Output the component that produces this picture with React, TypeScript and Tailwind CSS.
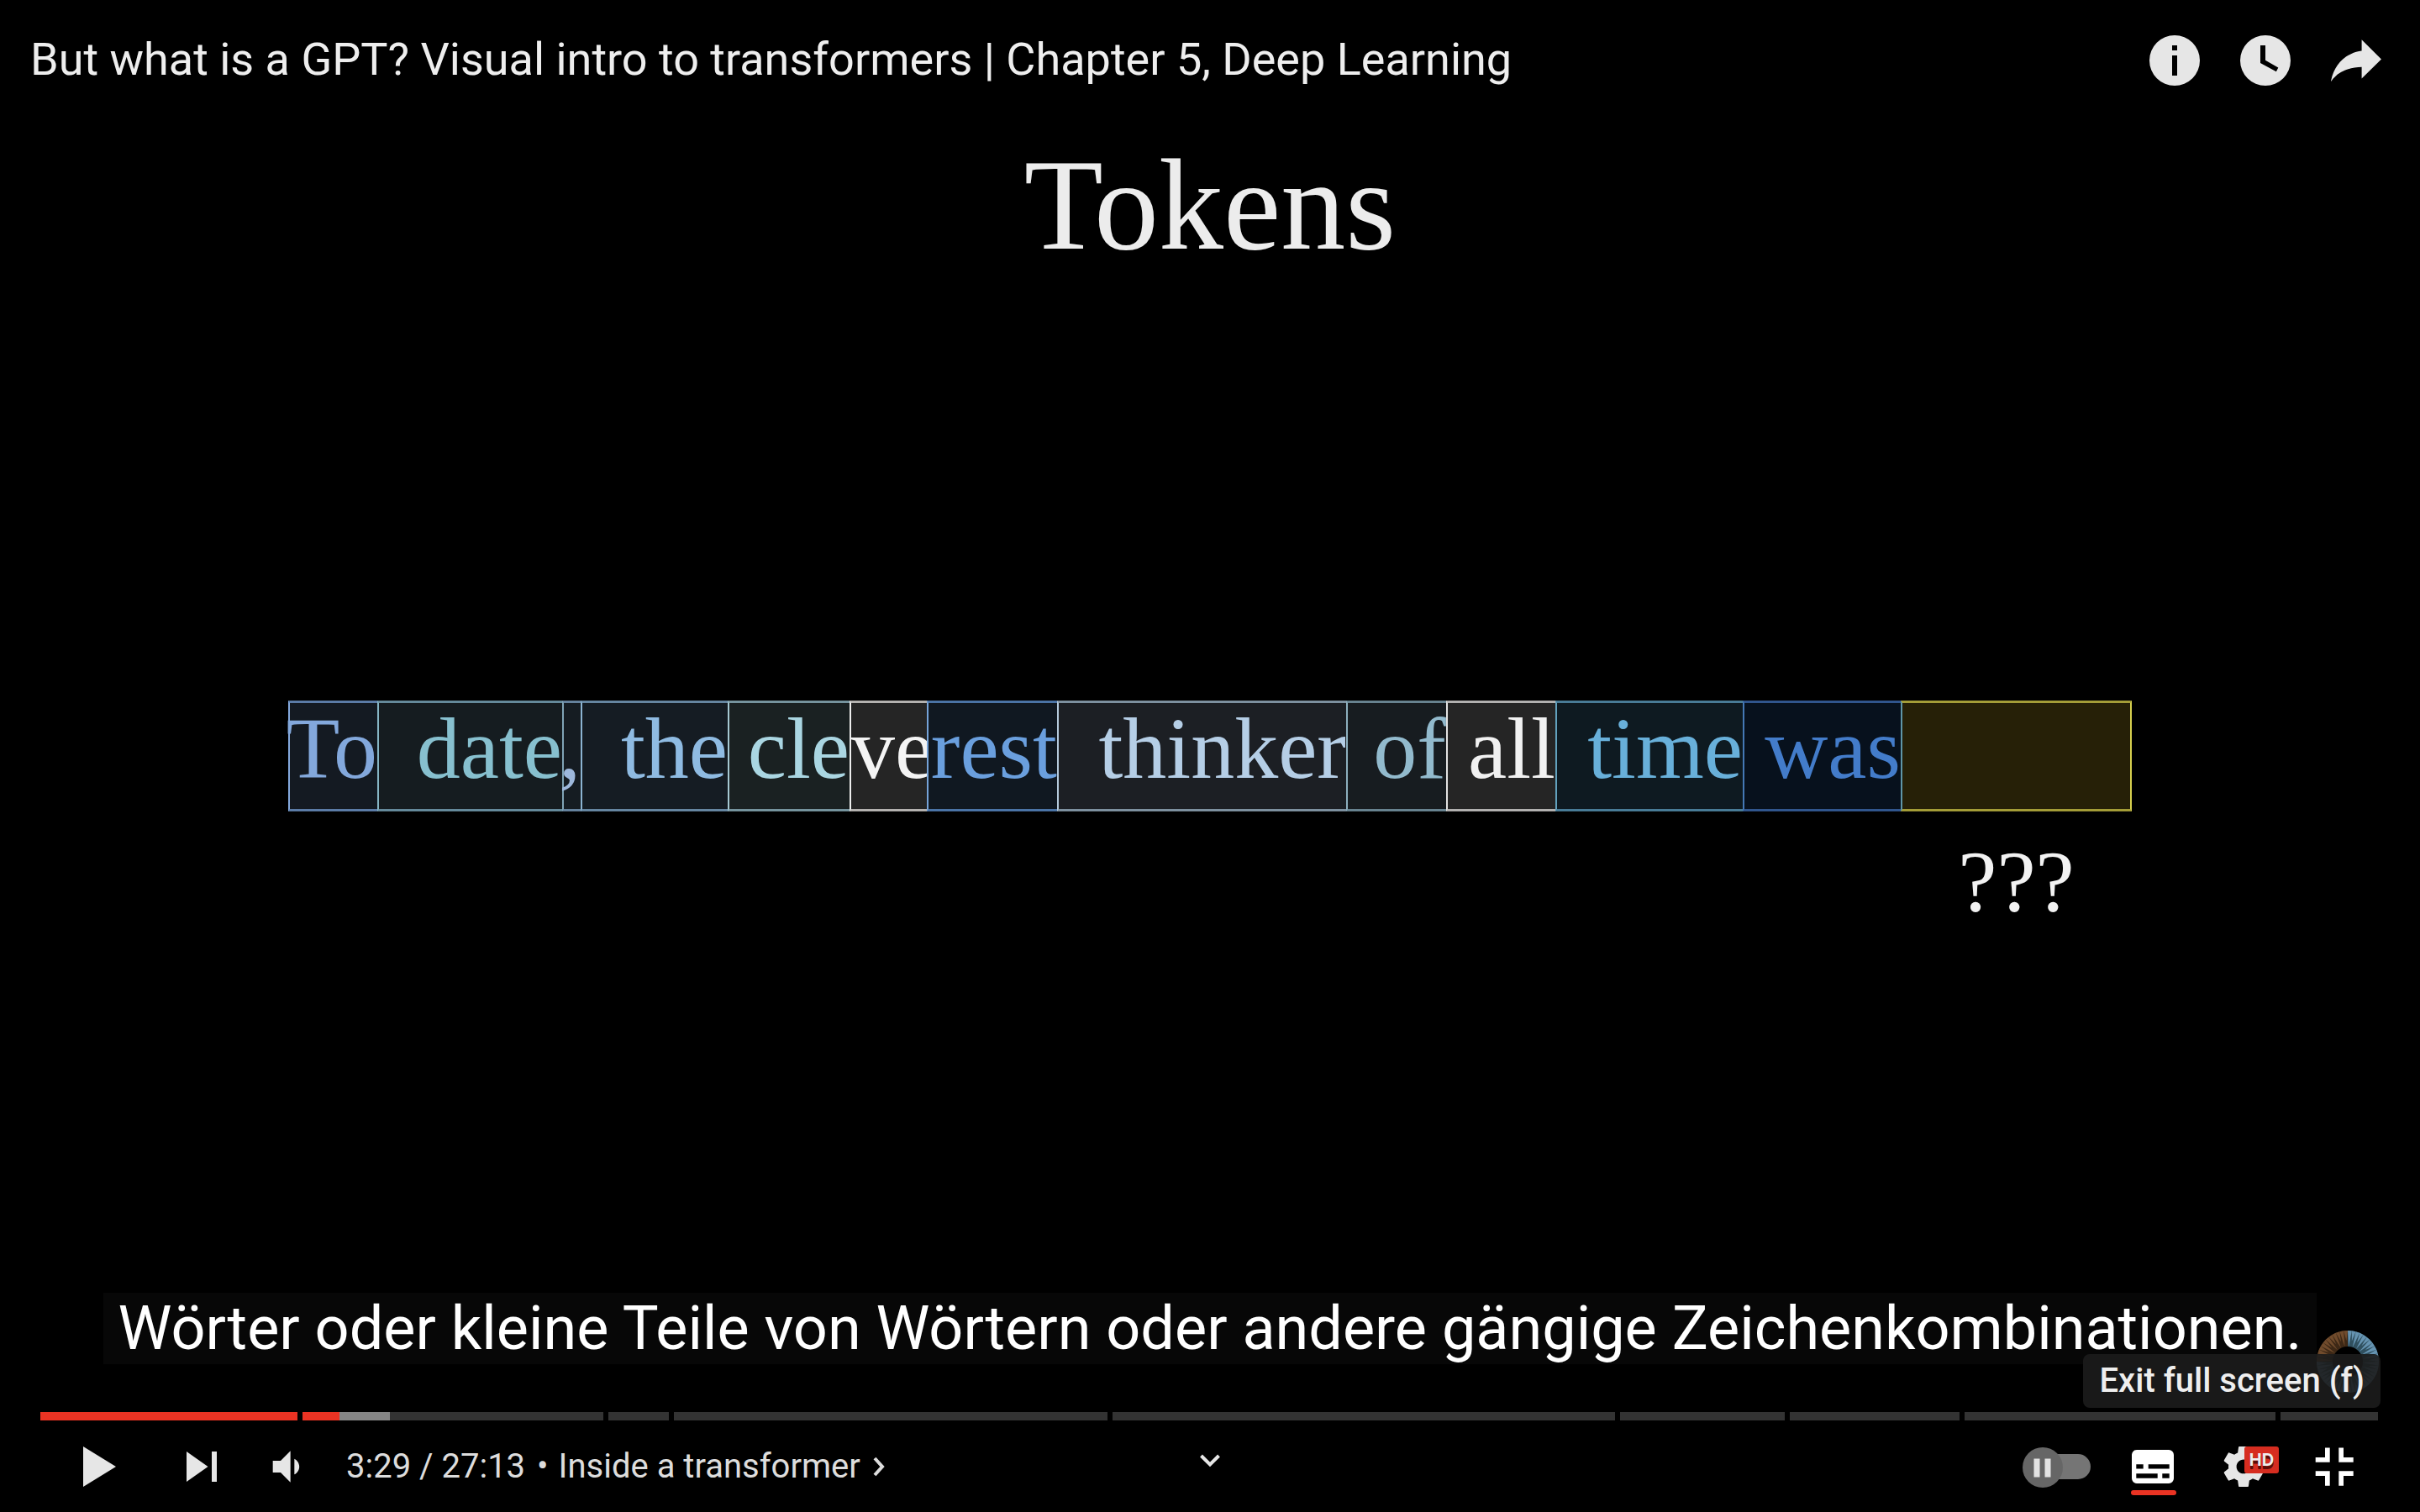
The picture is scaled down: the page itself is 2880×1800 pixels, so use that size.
import type { ReactNode } from "react";

type Token = { text: string; box: string };

const tokens: Token[] = [
  { text: "To", box: "justify-end bg-[#141a22] text-[#83a8dc] border-y-[#5b7ba6] border-l-[#83a8dc]" },
  { text: "date", box: "justify-end bg-[#151c20] text-[#87c0cf] border-y-[#64899a] border-l-[#86b5c4]" },
  { text: ",", box: "justify-end bg-[#151c22] text-[#9db8dc] border-y-[#64819c] border-l-[#7fa3b5]" },
  { text: "the", box: "justify-end bg-[#151c23] text-[#8fbbe2] border-y-[#6585a0] border-l-[#8cb4d2]" },
  { text: "cle", box: "justify-end bg-[#1a2122] text-[#aad6e2] border-y-[#75939d] border-l-[#a5c8d2]" },
  { text: "ve", box: "justify-start bg-[#252525] text-[#f4f4f4] border-y-[#b3b1af] border-l-[#ededed]" },
  { text: "rest", box: "justify-end bg-[#101821] text-[#6a9fde] border-y-[#4a73a5] border-l-[#76a3d8]" },
  { text: "thinker", box: "justify-end bg-[#1c1f24] text-[#b5cee6] border-y-[#7d909f] border-l-[#b4c9dc]" },
  { text: "of", box: "justify-end bg-[#171c20] text-[#92bacd] border-y-[#67828f] border-l-[#8dafbd]" },
  { text: "all", box: "justify-end bg-[#252525] text-[#f1f1f1] border-y-[#b1b0af] border-l-[#e2e2e2]" },
  { text: "time", box: "justify-end bg-[#0e1a21] text-[#68b0da] border-y-[#487b96] border-l-[#62a1bd]" },
  { text: "was", box: "justify-end bg-[#07111d] text-[#437cca] border-y-[#30558c] border-l-[#4478b5]" },
  { text: "", box: "bg-[#262007] border-y-[#a39c37] border-l-[#5f96a8] border-r-2 border-r-[#d6cf4e]" },
];

const chapters = [
  { length: 306, played: 306, loaded: 306 },
  { length: 358, played: 44, loaded: 104 },
  { length: 72, played: 0, loaded: 0 },
  { length: 516, played: 0, loaded: 0 },
  { length: 598, played: 0, loaded: 0 },
  { length: 196, played: 0, loaded: 0 },
  { length: 202, played: 0, loaded: 0 },
  { length: 370, played: 0, loaded: 0 },
  { length: 116, played: 0, loaded: 0 },
];

const tokenGrid =
  "grid grid-cols-[106fr_220fr_22fr_175fr_145fr_92fr_155fr_344fr_119fr_130fr_223fr_188fr_275fr]";

function IconButton({ label, children }: { label: string; children: ReactNode }) {
  return (
    <button type="button" aria-label={label} className="relative size-27 shrink-0">
      {children}
    </button>
  );
}

function Header() {
  return (
    <header className="flex items-center justify-between py-[18px] pr-[22px] pl-9">
      <a href="#video" className="pb-0.5 text-[54px] leading-[64px] text-[#eeeeee]">
        But what is a GPT? Visual intro to transformers | Chapter 5, Deep Learning
      </a>
      <div className="flex text-[#e6e6e6]">
        <IconButton label="Info">
          <svg viewBox="0 0 36 36" className="size-27" fill="currentColor" fillRule="evenodd">
            <path d="M18 8a10 10 0 1 0 0 20 10 10 0 0 0 0-20zM17 12h2v2h-2zM17 16h2v8h-2z" />
          </svg>
        </IconButton>
        <IconButton label="Watch later">
          <svg viewBox="0 0 36 36" className="size-27" fill="currentColor" fillRule="evenodd">
            <path d="M18 8a10 10 0 1 0 0 20 10 10 0 0 0 0-20zM16 12h2v5.9l5.1 2.9-.8 1.6L16 19z" />
          </svg>
        </IconButton>
        <IconButton label="Share">
          <svg viewBox="0 0 36 36" className="size-27" fill="currentColor">
            <path d="m20.2 14.19 0-4.45 7.79 7.79-7.79 7.62 0-4.56C16.27 20.69 12.1 21.81 9.34 24.76 8.8 25.13 7.6 27.29 8.12 25.65 9.08 21.32 11.8 17.18 15.98 15.38c1.33-.6 2.76-.98 4.22-1.19z" />
          </svg>
        </IconButton>
      </div>
    </header>
  );
}

function TokenSentence() {
  return (
    <section className="flex flex-1 flex-col justify-center gap-8 px-[343px] pt-[76px] font-['Liberation_Serif',serif] text-[104px] leading-[104px]">
      <div className={tokenGrid}>
        {tokens.map((t, i) => (
          <span key={i} className={`flex h-33 min-w-0 border-y-3 border-l-2 pt-0.5 ${t.box}`}>
            {t.text}
          </span>
        ))}
      </div>
      <div className={tokenGrid}>
        <span className="col-start-13 text-center text-[#f2f2f2]">???</span>
      </div>
    </section>
  );
}

function Watermark() {
  const count = 48;
  const point = (angle: number, r: number) =>
    `${(37 + r * Math.sin(angle)).toFixed(2)},${(37 - r * Math.cos(angle)).toFixed(2)}`;
  return (
    <svg viewBox="0 0 74 74" className="absolute right-[49px] bottom-[-34px] size-[74px]" aria-hidden="true">
      <path d="M37 9.5A27.5 27.5 0 1 1 9.5 37" fill="none" stroke="#30505f" strokeWidth="19" />
      <path d="M9.5 37A27.5 27.5 0 0 1 37 9.5" fill="none" stroke="#3d2816" strokeWidth="19" />
      {Array.from({ length: count }, (_, i) => {
        const step = (2 * Math.PI) / count;
        const a = i * step;
        const reach = i % 2 === 0 ? 18 : 25;
        return (
          <polygon
            key={i}
            points={`${point(a, 37)} ${point(a + step, 37)} ${point(a + step / 2, reach)}`}
            fill={i >= (count * 3) / 4 ? "#704b2c" : "#6593b1"}
          />
        );
      })}
    </svg>
  );
}

function Progress() {
  return (
    <div
      role="slider"
      tabIndex={0}
      aria-label="Seek slider"
      aria-valuemin={0}
      aria-valuemax={1633}
      aria-valuenow={209}
      className="mt-[57px] mr-[50px] mb-px ml-12 flex gap-1.5"
    >
      {chapters.map((c, i) => (
        <div
          key={i}
          className="flex h-2.5 min-w-0 basis-0 bg-[#333333]"
          style={{ flexGrow: c.length }}
        >
          <div className="bg-[#ea3323]" style={{ width: `${(c.played / c.length) * 100}%` }} />
          <div
            className="bg-[#858585]"
            style={{ width: `${((c.loaded - c.played) / c.length) * 100}%` }}
          />
        </div>
      ))}
    </div>
  );
}

function Controls() {
  return (
    <div className="grid grid-cols-[1fr_auto_1fr] items-center pr-12 pl-[63px] text-[#e6e6e6]">
      <div className="flex items-center">
        <IconButton label="Play">
          <svg viewBox="0 0 36 36" className="size-27" fill="currentColor">
            <path d="M12 10v16l13-8z" />
          </svg>
        </IconButton>
        <div className="ml-[15px] flex">
          <IconButton label="Next">
            <svg viewBox="0 0 36 36" className="size-27" fill="currentColor">
              <path d="M12 24l8.5-6L12 12zM22 12v12h2V12z" />
            </svg>
          </IconButton>
        </div>
        <button type="button" aria-label="Mute" className="ml-3 size-21">
          <svg viewBox="0 0 36 36" className="size-21" fill="currentColor">
            <path d="M8 21h4l5 5V10l-5 5H8zM19 14v8c1.48-.68 2.5-2.23 2.5-4 0-1.74-1.02-3.26-2.5-4z" />
          </svg>
        </button>
        <div className="ml-[22px] flex items-center gap-3.5 text-[40px] leading-12 whitespace-nowrap text-[#dddddd]">
          <span>3:29 / 27:13</span>
          <button type="button" className="flex items-center gap-3.5">
            <span className="-mr-0.5">•</span>
            <span>Inside a transformer</span>
            <svg viewBox="0 0 16 24" className="h-6 w-4" fill="none" stroke="currentColor" strokeWidth="4">
              <path d="M3 2l9 10-9 10" />
            </svg>
          </button>
        </div>
      </div>

      <button type="button" aria-label="Scroll for details" className="-ml-[15px] size-12">
        <svg viewBox="0 0 48 48" className="size-12" fill="none" stroke="currentColor" strokeWidth="4">
          <path d="M13.5 11L24 21.500L34.500 11" />
        </svg>
      </button>

      <div className="flex items-center justify-end">
        <button type="button" role="switch" aria-checked="false" aria-label="Autoplay" className="mt-0.5 mr-5">
          <svg viewBox="0 0 81 48" className="h-12 w-[81px]">
            <rect x="10" y="8" width="71" height="30" rx="15" fill="#757575" />
            <circle cx="24" cy="24" r="24" fill="#666666" />
            <path d="M13.500 13.500h7v22h-7zM26.500 13.500h7v22h-7z" fill="#e3e3e3" />
          </svg>
        </button>
        <IconButton label="Subtitles">
          <svg viewBox="0 0 108 108" className="size-27">
            <path
              fill="#ffffff"
              fillRule="evenodd"
              d="M35 34h38a6 6 0 0 1 6 6v28a6 6 0 0 1-6 6H35a6 6 0 0 1-6-6V40a6 6 0 0 1 6-6zM34.300 51.300v5.200h8.400v-5.200zM48.700 51.300v5.200h25v-5.200zM34.300 62.300v5.400h25.400v-5.400zM65.300 62.300v5.400h8.400v-5.400z"
            />
            <rect x="28" y="82" width="54" height="6" rx="3" fill="#ea3323" />
          </svg>
        </IconButton>
        <IconButton label="Settings">
          <svg viewBox="0 0 36 36" className="size-27" fill="currentColor" fillRule="evenodd">
            <path d="m23.94 18.78c.03-.25.05-.51.05-.78 0-.27-.02-.52-.05-.78l1.68-1.32c.15-.12.19-.33.09-.51l-1.6-2.76c-.09-.17-.31-.24-.48-.17l-1.99.8c-.41-.32-.86-.58-1.35-.78l-.3-2.12c-.02-.19-.19-.33-.39-.33l-3.2 0c-.2 0-.36.14-.39.33l-.3 2.12c-.48.2-.93.47-1.35.78l-1.99-.8c-.18-.07-.39 0-.48.17l-1.6 2.76c-.1.17-.05.39.09.51l1.68 1.32c-.03.25-.05.52-.05.78 0 .26.02.52.05.78l-1.68 1.32c-.15.12-.19.33-.09.51l1.6 2.76c.09.17.31.24.48.17l1.99-.8c.41.32.86.58 1.35.78l.3 2.12c.02.19.19.33.39.33l3.2 0c.2 0 .36-.14.39-.33l.3-2.12c.48-.2.93-.47 1.35-.78l1.99.8c.18.07.39 0 .48-.17l1.6-2.76c.09-.17.05-.39-.09-.51l-1.68-1.32zm-5.94 2.01c-1.54 0-2.8-1.25-2.8-2.8 0-1.54 1.25-2.8 2.8-2.8 1.54 0 2.8 1.25 2.8 2.8 0 1.54-1.25 2.8-2.8 2.8z" />
          </svg>
          <span className="absolute top-[30px] left-[55px] flex h-8 w-[41px] items-center justify-center rounded-[3px] bg-[#d62d20] font-['Inter',sans-serif] text-[20px] leading-8 font-bold text-[#eeeeee] [text-shadow:0_3px_0_#5c0d08,0_4px_0_#5c0d08]">
            HD
          </span>
        </IconButton>
        <div className="relative flex">
          <IconButton label="Exit full screen">
            <svg viewBox="0 0 108 108" className="size-27" fill="#ffffff">
              <path d="M43 31.500h5.700v17.200h-17V43H43zM59.300 31.500H65V43h11.700v5.700H59.300zM31.700 59.300h17v17.400H43V65H31.700zM59.300 59.300h17.400V65H65v11.700h-5.700z" />
            </svg>
          </IconButton>
          <div
            role="tooltip"
            className="absolute -right-px bottom-[124px] rounded-lg bg-[#1c1c1c]/90 px-[19px] py-2 text-[40px] leading-12 font-medium whitespace-nowrap text-[#eeeeee]"
          >
            Exit full screen (f)
          </div>
        </div>
      </div>
    </div>
  );
}

export default function App() {
  return (
    <main className="flex min-h-screen flex-col bg-black font-['Roboto',sans-serif]">
      <Header />
      <h1 className="mt-6 text-center font-['Liberation_Serif',serif] text-[154px] leading-[152px] text-[#ececec]">
        Tokens
      </h1>
      <TokenSentence />
      <div className="relative flex justify-center">
        <p className="bg-[#070707] px-[18px] text-[72px] leading-[85px] whitespace-nowrap text-white">
          Wörter oder kleine Teile von Wörtern oder andere gängige Zeichenkombinationen.
        </p>
        <Watermark />
      </div>
      <Progress />
      <Controls />
    </main>
  );
}
